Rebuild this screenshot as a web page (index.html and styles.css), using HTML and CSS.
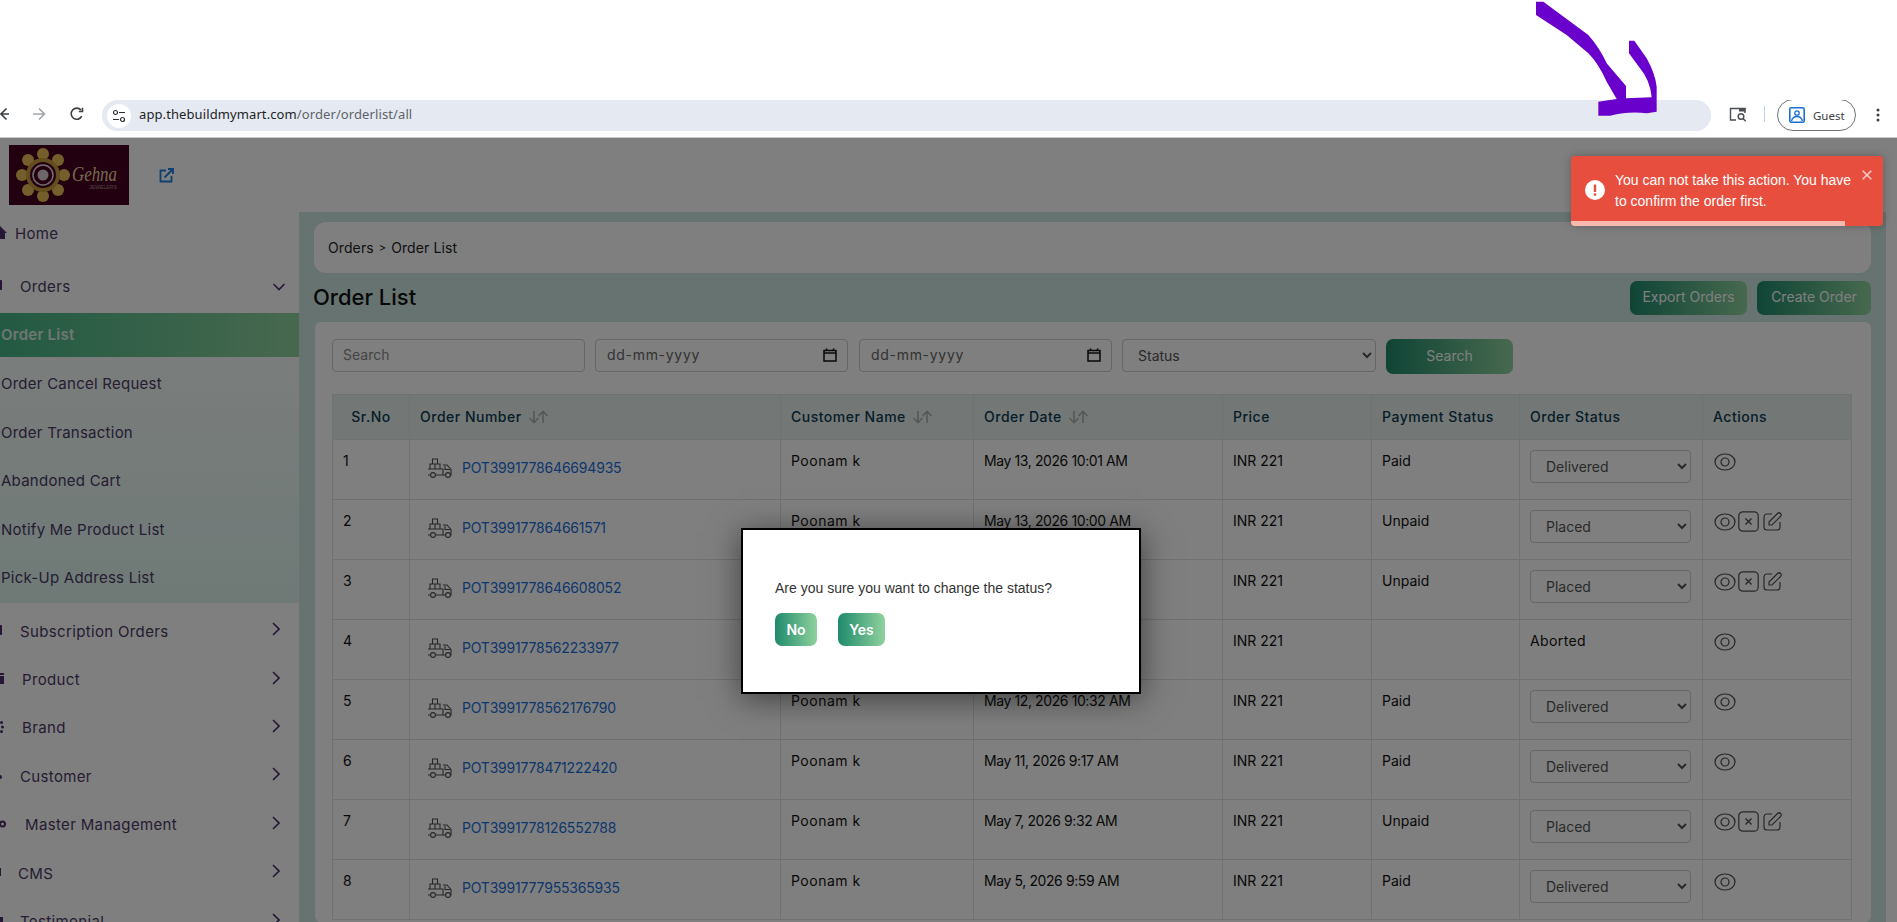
FILE: index.html
```html
<!DOCTYPE html>
<html lang="en">
<head>
  <meta charset="UTF-8">
  <title>Order List</title>
  <link rel="stylesheet" href="styles.css">
</head>
<body>
  <div class="blank"></div>
  <div class="toolbar">
    <svg class="tb-back" width="10" height="14" viewBox="0 0 10 14"><path d="M9 7H1M6.500 1.500 1 7l5.500 5.500" fill="none" stroke="#3c4043" stroke-width="1.600"/></svg>
    <svg class="tb-forward" width="13" height="14" viewBox="0 0 13 14"><path d="M0 7h11.500M6 1.500 11.500 7 6 12.500" fill="none" stroke="#a3a6aa" stroke-width="1.600"/></svg>
    <svg class="tb-reload" width="14" height="14" viewBox="0 0 14 14"><path d="M11.800 9.200A5.600 5.600 0 1 1 11 3M12.500 .8v3.700H8.800" fill="none" stroke="#3c4043" stroke-width="1.600"/></svg>
    <div class="urlbar">
      <span class="site-chip">
        <svg width="14" height="14" viewBox="0 0 14 14"><g fill="none" stroke="#2b2f33" stroke-width="1.200"><circle cx="3.500" cy="3.500" r="2"/><circle cx="10.500" cy="10.500" r="2"/><path d="M7 3.500h6M1 10.500h6"/></g></svg>
      </span>
      <span class="url"><span class="url-host">app.thebuildmymart.com</span>/order/orderlist/all</span>
    </div>
    <svg class="tb-tabs" width="18" height="15" viewBox="0 0 18 15"><g fill="none" stroke="#4a4d51" stroke-width="1.400"><path d="M7 13H1.500V1.500H16V6"/><circle cx="12" cy="9.500" r="2.800"/><path d="m14 11.500 2.800 2.800"/></g><rect x="10" y="1" width="6.500" height="3.500" fill="#4a4d51"/></svg>
    <span class="tb-divider"></span>
    <div class="guest">
      <svg width="16" height="16" viewBox="0 0 16 16"><rect x=".8" y=".8" width="14.400" height="14.400" rx="1.500" fill="none" stroke="#1a6fd4" stroke-width="1.600"/><circle cx="8" cy="6" r="2.200" fill="none" stroke="#1a6fd4" stroke-width="1.300"/><path d="M2.500 14c1-3.500 3-4.500 5.500-4.500s4.500 1 5.500 4.500" fill="none" stroke="#1a6fd4" stroke-width="1.300"/></svg>
      <span>Guest</span>
    </div>
    <svg class="tb-menu" width="4" height="14" viewBox="0 0 4 14"><circle cx="2" cy="2" r="1.500" fill="#3c4043"/><circle cx="2" cy="7" r="1.500" fill="#3c4043"/><circle cx="2" cy="12" r="1.500" fill="#3c4043"/></svg>
  </div>

  <div class="app">
    <header class="topbar">
      <svg class="logo" width="120" height="60" viewBox="0 0 120 60">
        <rect width="120" height="60" fill="#47001f"/>
        <g fill="#e8bf58">
          <ellipse cx="34" cy="9" rx="6" ry="6"/>
          <ellipse cx="34" cy="51" rx="6" ry="6"/>
          <ellipse cx="13" cy="30" rx="6" ry="6"/>
          <ellipse cx="55" cy="30" rx="6" ry="6"/>
          <ellipse cx="19" cy="15" rx="6" ry="6"/>
          <ellipse cx="49" cy="15" rx="6" ry="6"/>
          <ellipse cx="19" cy="45" rx="6" ry="6"/>
          <ellipse cx="49" cy="45" rx="6" ry="6"/>
        </g>
        <circle cx="34" cy="30" r="17" fill="#c89a3c"/>
        <circle cx="34" cy="30" r="13" fill="#47001f"/>
        <circle cx="34" cy="30" r="10" fill="none" stroke="#ead9df" stroke-width="1.500"/>
        <circle cx="34" cy="30" r="5.500" fill="#d9ccd2"/>
        <text class="logo-name" x="63" y="36" textLength="45" lengthAdjust="spacingAndGlyphs">Gehna</text>
        <text class="logo-sub" x="80" y="44" textLength="28" lengthAdjust="spacingAndGlyphs">JEWELERS</text>
      </svg>
      <svg class="open-link" width="15" height="15" viewBox="0 0 15 15"><g fill="none" stroke="#1a7fe0" stroke-width="1.800"><path d="M7 2.500H1.500v11h11V8"/><path d="M5.500 9.500 13.500 1.500M9 1h5v5"/></g></svg>
    </header>

    <div class="layout">
      <aside class="sidebar">
        <a class="nav-item nav-home">
          <svg width="7" height="14" viewBox="0 0 7 14"><path d="M-7 7 0 0l7 7H5v6H-5V7z" fill="#4a2f6b"/></svg>
          <span>Home</span>
        </a>
        <a class="nav-item nav-orders">
          <svg width="12" height="12" viewBox="0 0 12 12"><rect x="-6" y="1" width="8" height="10" rx="1" fill="#4a2f6b"/></svg>
          <span>Orders</span>
          <svg class="chev" width="14" height="8" viewBox="0 0 14 8"><path d="m1.500 1 5.500 5.500L12.500 1" fill="none" stroke="#4a2f6b" stroke-width="1.600"/></svg>
        </a>
        <div class="subnav">
          <a class="sub-item active">Order List</a>
          <a class="sub-item">Order Cancel Request</a>
          <a class="sub-item">Order Transaction</a>
          <a class="sub-item">Abandoned Cart</a>
          <a class="sub-item">Notify Me Product List</a>
          <a class="sub-item">Pick-Up Address List</a>
        </div>
        <a class="nav-item">
          <svg width="12" height="12" viewBox="0 0 12 12"><rect x="-6" y="1" width="8" height="10" rx="1" fill="#4a2f6b"/></svg>
          <span>Subscription Orders</span>
          <svg class="chev-right" width="8" height="14" viewBox="0 0 8 14"><path d="m1 1 6 6-6 6" fill="none" stroke="#4a2f6b" stroke-width="1.600"/></svg>
        </a>
        <a class="nav-item">
          <svg width="14" height="12" viewBox="0 0 14 12"><path d="M-4 0H4V2H-4ZM-4 3H4V11H-4Z" fill="#4a2f6b"/></svg>
          <span>Product</span>
          <svg class="chev-right" width="8" height="14" viewBox="0 0 8 14"><path d="m1 1 6 6-6 6" fill="none" stroke="#4a2f6b" stroke-width="1.600"/></svg>
        </a>
        <a class="nav-item">
          <svg width="14" height="12" viewBox="0 0 14 12"><g fill="#4a2f6b"><circle cx="1.500" cy="1.500" r="1.500"/><circle cx="2.500" cy="6" r="1.500"/><circle cx="1.500" cy="10.500" r="1.500"/></g></svg>
          <span>Brand</span>
          <svg class="chev-right" width="8" height="14" viewBox="0 0 8 14"><path d="m1 1 6 6-6 6" fill="none" stroke="#4a2f6b" stroke-width="1.600"/></svg>
        </a>
        <a class="nav-item">
          <svg width="12" height="12" viewBox="0 0 12 12"><circle cx="0" cy="8" r="2" fill="#4a2f6b"/></svg>
          <span>Customer</span>
          <svg class="chev-right" width="8" height="14" viewBox="0 0 8 14"><path d="m1 1 6 6-6 6" fill="none" stroke="#4a2f6b" stroke-width="1.600"/></svg>
        </a>
        <a class="nav-item">
          <svg width="17" height="12" viewBox="0 0 17 12"><circle cx="2.500" cy="6" r="2.500" fill="none" stroke="#4a2f6b" stroke-width="2"/></svg>
          <span>Master Management</span>
          <svg class="chev-right" width="8" height="14" viewBox="0 0 8 14"><path d="m1 1 6 6-6 6" fill="none" stroke="#4a2f6b" stroke-width="1.600"/></svg>
        </a>
        <a class="nav-item">
          <svg width="10" height="12" viewBox="0 0 10 12"><rect x="-1" y="2" width="2" height="8" fill="#4a2f6b"/></svg>
          <span>CMS</span>
          <svg class="chev-right" width="8" height="14" viewBox="0 0 8 14"><path d="m1 1 6 6-6 6" fill="none" stroke="#4a2f6b" stroke-width="1.600"/></svg>
        </a>
        <a class="nav-item">
          <svg width="12" height="12" viewBox="0 0 12 12"><rect x="-3" y="2" width="6" height="8" fill="#4a2f6b"/></svg>
          <span>Testimonial</span>
          <svg class="chev-right" width="8" height="14" viewBox="0 0 8 14"><path d="m1 1 6 6-6 6" fill="none" stroke="#4a2f6b" stroke-width="1.600"/></svg>
        </a>
      </aside>

      <main class="content">
        <div class="crumbs">Orders <span class="crumb-sep">&gt;</span> Order List</div>
        <div class="title-row">
          <h1>Order List</h1>
          <div class="title-actions">
            <a class="btn btn-export">Export Orders</a>
            <a class="btn btn-create">Create Order</a>
          </div>
        </div>
        <section class="card">
          <div class="filters">
            <input class="field f-search" type="text" placeholder="Search">
            <div class="field f-date"><span>dd-mm-yyyy</span><svg width="14" height="14" viewBox="0 0 14 14"><path d="M1 2.500h12v10.500H1zM1 5h12" fill="none" stroke="#111" stroke-width="1.500"/><path d="M3.500 .5v2M10.500 .5v2" stroke="#111" stroke-width="1.500"/></svg></div>
            <div class="field f-date f-date-two"><span>dd-mm-yyyy</span><svg width="14" height="14" viewBox="0 0 14 14"><path d="M1 2.500h12v10.500H1zM1 5h12" fill="none" stroke="#111" stroke-width="1.500"/><path d="M3.500 .5v2M10.500 .5v2" stroke="#111" stroke-width="1.500"/></svg></div>
            <select class="field f-status"><option>Status</option></select>
            <a class="btn btn-search">Search</a>
          </div>

          <table class="orders">
            <thead>
              <tr>
                <th class="th-center">Sr.No</th>
                <th>Order Number <svg class="sort" width="22" height="14" viewBox="0 0 22 14"><path d="M6 1v11M1.500 8 6 12.500 10.500 8M15 13V2M10.500 6 15 1.500 19.500 6" fill="none" stroke="#a8b3b0" stroke-width="1.600"/></svg></th>
                <th>Customer Name <svg class="sort" width="22" height="14" viewBox="0 0 22 14"><path d="M6 1v11M1.500 8 6 12.500 10.500 8M15 13V2M10.500 6 15 1.500 19.500 6" fill="none" stroke="#a8b3b0" stroke-width="1.600"/></svg></th>
                <th>Order Date <svg class="sort" width="22" height="14" viewBox="0 0 22 14"><path d="M6 1v11M1.500 8 6 12.500 10.500 8M15 13V2M10.500 6 15 1.500 19.500 6" fill="none" stroke="#a8b3b0" stroke-width="1.600"/></svg></th>
                <th>Price</th>
                <th>Payment Status</th>
                <th>Order Status</th>
                <th>Actions</th>
              </tr>
            </thead>
            <tbody>
              <tr>
                <td>1</td>
                <td><div class="order-no"><svg class="truck" width="25" height="20" viewBox="0 0 25 20"><use href="#truck"/></svg><a>POT3991778646694935</a></div></td>
                <td>Poonam k</td><td>May 13, 2026 10:01 AM</td><td>INR 221</td><td>Paid</td>
                <td><select class="status"><option>Delivered</option></select></td>
                <td><div class="acts"><svg width="22" height="18" viewBox="0 0 22 18"><use href="#eye"/></svg></div></td>
              </tr>
              <tr>
                <td>2</td>
                <td><div class="order-no"><svg class="truck" width="25" height="20" viewBox="0 0 25 20"><use href="#truck"/></svg><a>POT399177864661571</a></div></td>
                <td>Poonam k</td><td>May 13, 2026 10:00 AM</td><td>INR 221</td><td>Unpaid</td>
                <td><select class="status"><option>Placed</option></select></td>
                <td><div class="acts"><svg width="22" height="18" viewBox="0 0 22 18"><use href="#eye"/></svg><svg width="21" height="21" viewBox="0 0 21 21"><use href="#cross"/></svg><svg class="act-edit" width="19" height="19" viewBox="0 0 19 19"><use href="#edit"/></svg></div></td>
              </tr>
              <tr>
                <td>3</td>
                <td><div class="order-no"><svg class="truck" width="25" height="20" viewBox="0 0 25 20"><use href="#truck"/></svg><a>POT3991778646608052</a></div></td>
                <td>Poonam k</td><td>May 13, 2026 9:59 AM</td><td>INR 221</td><td>Unpaid</td>
                <td><select class="status"><option>Placed</option></select></td>
                <td><div class="acts"><svg width="22" height="18" viewBox="0 0 22 18"><use href="#eye"/></svg><svg width="21" height="21" viewBox="0 0 21 21"><use href="#cross"/></svg><svg class="act-edit" width="19" height="19" viewBox="0 0 19 19"><use href="#edit"/></svg></div></td>
              </tr>
              <tr>
                <td>4</td>
                <td><div class="order-no"><svg class="truck" width="25" height="20" viewBox="0 0 25 20"><use href="#truck"/></svg><a>POT3991778562233977</a></div></td>
                <td>Poonam k</td><td>May 12, 2026 10:40 AM</td><td>INR 221</td><td></td>
                <td class="td-plain">Aborted</td>
                <td><div class="acts"><svg width="22" height="18" viewBox="0 0 22 18"><use href="#eye"/></svg></div></td>
              </tr>
              <tr>
                <td>5</td>
                <td><div class="order-no"><svg class="truck" width="25" height="20" viewBox="0 0 25 20"><use href="#truck"/></svg><a>POT3991778562176790</a></div></td>
                <td>Poonam k</td><td>May 12, 2026 10:32 AM</td><td>INR 221</td><td>Paid</td>
                <td><select class="status"><option>Delivered</option></select></td>
                <td><div class="acts"><svg width="22" height="18" viewBox="0 0 22 18"><use href="#eye"/></svg></div></td>
              </tr>
              <tr>
                <td>6</td>
                <td><div class="order-no"><svg class="truck" width="25" height="20" viewBox="0 0 25 20"><use href="#truck"/></svg><a>POT3991778471222420</a></div></td>
                <td>Poonam k</td><td>May 11, 2026 9:17 AM</td><td>INR 221</td><td>Paid</td>
                <td><select class="status"><option>Delivered</option></select></td>
                <td><div class="acts"><svg width="22" height="18" viewBox="0 0 22 18"><use href="#eye"/></svg></div></td>
              </tr>
              <tr>
                <td>7</td>
                <td><div class="order-no"><svg class="truck" width="25" height="20" viewBox="0 0 25 20"><use href="#truck"/></svg><a>POT3991778126552788</a></div></td>
                <td>Poonam k</td><td>May 7, 2026 9:32 AM</td><td>INR 221</td><td>Unpaid</td>
                <td><select class="status"><option>Placed</option></select></td>
                <td><div class="acts"><svg width="22" height="18" viewBox="0 0 22 18"><use href="#eye"/></svg><svg width="21" height="21" viewBox="0 0 21 21"><use href="#cross"/></svg><svg class="act-edit" width="19" height="19" viewBox="0 0 19 19"><use href="#edit"/></svg></div></td>
              </tr>
              <tr>
                <td>8</td>
                <td><div class="order-no"><svg class="truck" width="25" height="20" viewBox="0 0 25 20"><use href="#truck"/></svg><a>POT3991777955365935</a></div></td>
                <td>Poonam k</td><td>May 5, 2026 9:59 AM</td><td>INR 221</td><td>Paid</td>
                <td><select class="status"><option>Delivered</option></select></td>
                <td><div class="acts"><svg width="22" height="18" viewBox="0 0 22 18"><use href="#eye"/></svg></div></td>
              </tr>
            </tbody>
          </table>
        </section>
      </main>
    </div>

    <div class="backdrop"></div>

    <div class="toast">
      <svg width="20" height="20" viewBox="0 0 20 20"><circle cx="10" cy="10" r="10" fill="#fff"/><rect x="8.800" y="4.500" width="2.400" height="7.500" fill="#e84e3e"/><rect x="8.800" y="13.300" width="2.400" height="2.400" fill="#e84e3e"/></svg>
      <p>You can not take this action. You have to confirm the order first.</p>
      <svg class="toast-close" width="10" height="10" viewBox="0 0 10 10"><path d="m.7.700 8.600 8.600M9.300.7.700 9.300" stroke="#f7c9c3" stroke-width="1.600"/></svg>
      <span class="toast-progress"></span>
    </div>

    <div class="modal">
      <p>Are you sure you want to change the status?</p>
      <div class="modal-actions">
        <a class="modal-btn">No</a>
        <a class="modal-btn modal-yes">Yes</a>
      </div>
    </div>
  </div>

  <svg class="annotation" width="397" height="120" viewBox="0 0 1191 360">
    <path d="M108 5 130 5 265 105Q300 145 320 190L378 258V295L455 292Q450 240 420 205L387 160V122H403L440 175Q465 220 470 260L470 335 440 340Q390 332 330 347H295V305L350 297 320 245Q295 190 265 160L200 105 108 45Z" fill="#6a00cc"/>
  </svg>

  <svg class="defs" width="0" height="0">
    <defs>
      <g id="truck" fill="none" stroke="#4f4f4f" stroke-width="1.100">
        <path d="M1 11h15v6H8.500M3.500 17H1zM3 11V6h5v5M8 11V6h5v5M5.500 6V1h5v5M16 7h4l4 4.500V17h-1M16 17h2.500M18 8v3.500h5"/>
        <circle cx="6" cy="17" r="2.400"/><circle cx="21" cy="17" r="2.400"/>
      </g>
      <g id="eye" fill="none" stroke="#4f4f4f" stroke-width="1.200">
        <ellipse cx="11" cy="9" rx="10" ry="8"/><circle cx="11" cy="9" r="4"/>
      </g>
      <g id="cross" fill="none" stroke="#4f4f4f" stroke-width="1.200">
        <rect x=".8" y=".8" width="19.400" height="19.400" rx="4"/><path d="m7.500 7.500 6 6M13.500 7.500l-6 6" stroke-width="1.400"/>
      </g>
      <g id="edit" fill="none" stroke="#4f4f4f" stroke-width="1.200">
        <path d="M9 2H4a3 3 0 0 0-3 3v10a3 3 0 0 0 3 3h10a3 3 0 0 0 3-3v-5"/>
        <path d="M6 10 14.500 1.500a2 2 0 0 1 3 3L9 13H6z"/>
      </g>
    </defs>
  </svg>
</body>
</html>
```

FILE: styles.css
```css
* { box-sizing: border-box; }

html, body {
  margin: 0;
  height: 922px;
  overflow: hidden;
  background: #fff;
}
body {
  position: relative;
  font-family: Inter, "Open Sans", sans-serif;
  color: #222;
}
a { text-decoration: none; }

/* browser chrome */
.blank {
  position: relative;
  z-index: 1;
  height: 100px;
  background: #fff;
}
.toolbar {
  height: 38px;
  display: flex;
  align-items: flex-start;
  border-bottom: 1px solid #c9c9c9;
}
.toolbar > svg { margin-top: 7px; flex: none; }
.tb-forward { margin-left: 23px; }
.tb-reload { margin-left: 24px; }
.urlbar {
  margin-left: 18px;
  width: 1609px;
  height: 31px;
  flex: none;
  border-radius: 16px;
  background: #e4e9f2;
  display: flex;
  align-items: center;
  padding-left: 5px;
}
.site-chip {
  width: 24px;
  height: 24px;
  border-radius: 50%;
  background: #fff;
  display: flex;
  align-items: center;
  justify-content: center;
}
.url {
  margin: -3px 0 0 8px;
  font: 13px "Noto Sans", sans-serif;
  letter-spacing: .1px;
  color: #5f6368;
}
.url-host { color: #1f1f1f; }
.toolbar > .tb-tabs { margin-left: 18px; margin-top: 7px; }
.tb-divider {
  width: 1px;
  height: 16px;
  margin: 6px 0 0 17px;
  background: #bcd3f0;
}
.guest {
  margin: -1px 0 0 12px;
  width: 79px;
  height: 32px;
  flex: none;
  border: 1px solid #6f7276;
  border-radius: 16px;
  display: flex;
  align-items: center;
  gap: 8px;
  padding-left: 11px;
  font: 11.500px "Noto Sans", sans-serif;
  color: #3c4043;
}
.toolbar > .tb-menu { margin-left: 20px; margin-top: 8px; }

/* app */
.app {
  position: relative;
  height: 784px;
  overflow: hidden;
  font-size: 14px;
}
.topbar {
  height: 74px;
  display: flex;
  align-items: center;
  padding: 0 0 0 9px;
  background: #fff;
}
.logo-name { font: italic 21px "Liberation Serif", serif; fill: #e6d3a6; }
.logo-sub { font: 6px "Liberation Sans", sans-serif; fill: #a88; }
.open-link { margin-left: 30px; }

.layout { display: flex; height: 710px; }

.sidebar {
  width: 299px;
  flex: none;
  background: #fff;
  color: #4b3a63;
  font-size: 15px;
}
.nav-item {
  height: 48.400px;
  display: flex;
  align-items: center;
  gap: 8px;
  padding-right: 19px;
}
.nav-item span { letter-spacing: .35px; }
.nav-item svg:first-child { flex: none; margin-top: -2px; }
.nav-home { height: 43px; }
.nav-orders { margin-top: 7px; height: 48px; }
.chev { margin-left: auto; margin-right: -6px; margin-top: 2px; }
.chev-right { margin-left: auto; margin-top: -4px; }
.subnav {
  margin: 3px 0 4px;
  background: linear-gradient(#f8fbfa, #def5ef);
}
.sub-item {
  display: flex;
  align-items: center;
  height: 48.500px;
  padding: 0 0 2px 1px;
  letter-spacing: .25px;
}
.sub-item.active {
  height: 44px;
  margin: 1px 0 3.500px;
  color: #dfeee6;
  font-weight: 600;
  background: linear-gradient(90deg, #46b486, #8fd29e);
}

.content {
  width: 1587px;
  flex: none;
  background: #cee6e0;
  padding: 10px 15px 0;
}
.crumbs {
  height: 51px;
  border-radius: 12px;
  background: #fff;
  display: flex;
  align-items: center;
  gap: 5px;
  padding-left: 14px;
  font-size: 14px;
  letter-spacing: .1px;
}
.crumb-sep { font-size: 11px; }
.title-row {
  height: 49px;
  display: flex;
  align-items: center;
  justify-content: space-between;
}
.title-row h1 {
  margin: -1px 0 0 -1px;
  font-size: 22px;
  font-weight: 500;
  color: #111;
}
.title-actions { display: flex; gap: 10px; }
.btn {
  height: 34px;
  display: flex;
  align-items: center;
  justify-content: center;
  padding-bottom: 2px;
  border-radius: 7px;
  color: #fff;
  font-size: 14px;
  background: linear-gradient(90deg, #1f8a6c, #8fd29e);
}
.btn-export { width: 117px; }
.btn-create { width: 114px; }

.card {
  background: #fff;
  border-radius: 6px;
  padding: 17px 18px 0 17px;
  height: 600px;
  margin-left: 1px;
}
.filters { display: flex; gap: 10px; height: 34px; }
.field {
  height: 33px;
  border: 1px solid #ccc;
  border-radius: 4px;
  background: #fff;
  font: 14px Inter, sans-serif;
  color: #666;
}
.f-search { width: 253px; padding: 0 10px 2px; outline: 0; }
.f-search::placeholder { color: #888; }
.f-date {
  width: 253px;
  display: flex;
  align-items: center;
  justify-content: space-between;
  padding: 0 10px 2px 11px;
  letter-spacing: .7px;
  margin-right: 1px;
}
.f-date-two { width: 253px; margin-right: 0; }
.f-status { width: 254px; padding-left: 11px; color: #555; }
.btn-search { width: 127px; height: 35px; }

.orders {
  margin-top: 21px;
  width: 1520px;
  table-layout: fixed;
  border-collapse: collapse;
  font-size: 14px;
}
.orders th, .orders td { border: 1px solid #dfe5e4; }
.orders th {
  height: 45px;
  background: #e6f0ed;
  color: #0e3a52;
  font-weight: 500;
  letter-spacing: .5px;
  text-align: left;
  padding: 0 10px 2px;
  white-space: nowrap;
}
.orders th:nth-child(1) { width: 77px; }
.orders th:nth-child(2) { width: 371px; }
.orders th:nth-child(3) { width: 193px; }
.orders th:nth-child(4) { width: 249px; }
.orders th:nth-child(5) { width: 149px; }
.orders th:nth-child(6) { width: 148px; }
.orders th:nth-child(7) { width: 183px; }
.orders th.th-center { text-align: center; }
.orders td {
  height: 60px;
  vertical-align: top;
  padding: 10px;
  line-height: 21px;
  color: #111;
}
.orders td:nth-child(3) { letter-spacing: .5px; }
.orders td:nth-child(4) { letter-spacing: -.4px; }
.orders td.td-plain { letter-spacing: .4px; }
.sort { vertical-align: -2px; margin-left: 2px; }
.order-no {
  display: flex;
  align-items: center;
  gap: 10px;
  padding: 7px 0 0 7px;
}
.order-no a { color: #1a6ed8; letter-spacing: -.2px; }
.truck { flex: none; }
.status {
  display: block;
  width: 161px;
  height: 33px;
  border: 1px solid #ccc;
  border-radius: 4px;
  background: #fff;
  padding-left: 11px;
  font: 14px Inter, sans-serif;
  color: #555;
}
.acts {
  display: flex;
  align-items: center;
  gap: 2px;
  min-height: 21px;
  margin: 1px 0 0 1px;
}
.acts svg { flex: none; }
.acts .act-edit { margin-left: 2px; }

.backdrop {
  position: absolute;
  inset: 0;
  background: rgba(0, 0, 0, .5);
}

.toast {
  position: absolute;
  left: 1571px;
  top: 18px;
  width: 312px;
  height: 70px;
  padding: 14px 30px 0 44px;
  border-radius: 4px;
  overflow: hidden;
  background: #e84e3e;
  box-shadow: 0 0 8px rgba(0, 0, 0, .25);
}
.toast > svg:first-child { position: absolute; left: 14px; top: 24px; }
.toast p {
  margin: 0;
  font: 14px/21px "Liberation Sans", sans-serif;
  color: #fff;
}
.toast-close { position: absolute; right: 11px; top: 14px; }
.toast-progress {
  position: absolute;
  left: 0;
  bottom: 0;
  width: 274px;
  height: 5px;
  background: #f8b9b1;
}

.modal {
  position: absolute;
  left: 741px;
  top: 390px;
  width: 400px;
  height: 166px;
  border: 2px solid #000;
  background: #fff;
  padding: 48px 32px 0;
  box-shadow: 0 5px 30px rgba(0, 0, 0, .5);
  font-family: "Liberation Sans", sans-serif;
}
.modal p {
  margin: 0;
  font-size: 14px;
  line-height: 20px;
  color: #333;
}
.modal-actions { display: flex; gap: 21px; margin-top: 15px; }
.modal-btn {
  width: 42px;
  height: 33px;
  display: flex;
  align-items: center;
  justify-content: center;
  border-radius: 7px;
  color: #fff;
  font: 600 14px Inter, sans-serif;
  background: linear-gradient(90deg, #1f8a6c, #8fd29e);
}
.modal-yes { width: 47px; }

.annotation {
  position: absolute;
  z-index: 2;
  left: 1500px;
  top: 0;
}
.defs { position: absolute; }
```
